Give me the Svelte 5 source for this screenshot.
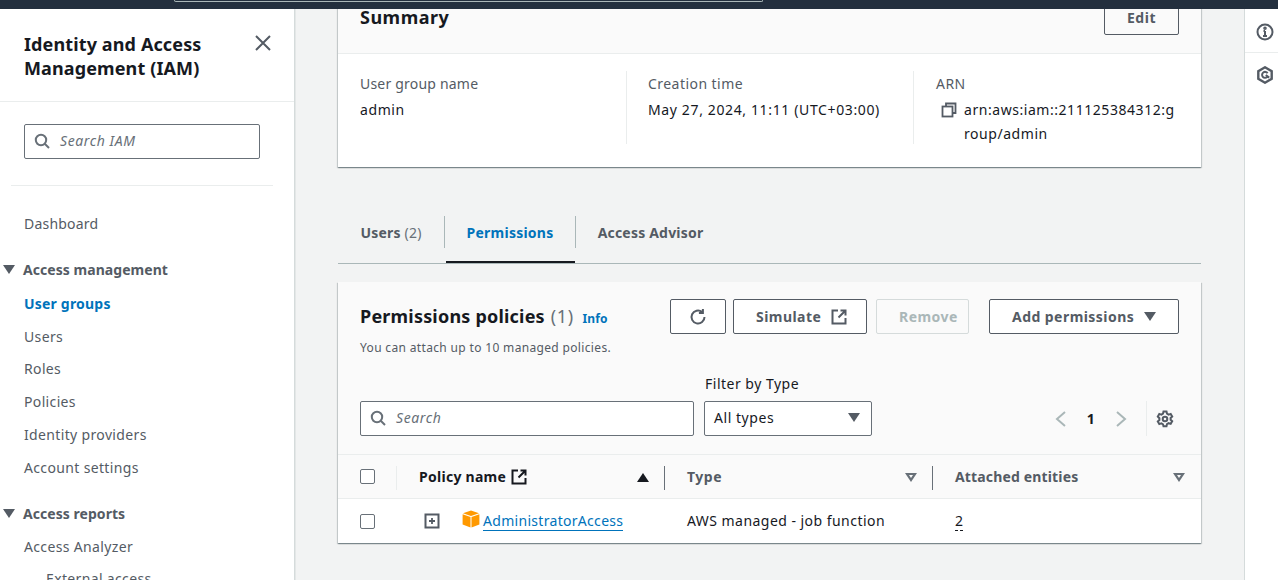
<script>
  const navA = ['Users', 'Roles', 'Policies', 'Identity providers', 'Account settings'];
</script>

<div class="page">
  <header class="topbar"><div class="topsearch"></div></header>
  <div class="body">
    <aside class="side">
      <div class="side-head">
        <h2>Identity and Access Management (IAM)</h2>
        <svg class="close" width="16" height="16" viewBox="0 0 16 16"><path d="M1 1l14 14M15 1L1 15" /></svg>
      </div>
      <div class="side-search-wrap">
        <div class="input side-search">
          <svg class="mag" width="16" height="16" viewBox="0 0 16 16"><circle cx="7" cy="7" r="5.2" /><path d="M11 11l4 4" /></svg>
          <span>Search IAM</span>
        </div>
      </div>
      <div class="side-rule"></div>
      <nav>
        <a class="item first">Dashboard</a>
        <div class="sect"><i class="caret"></i>Access management</div>
        <a class="item active">User groups</a>
        {#each navA as n}<a class="item">{n}</a>{/each}
        <div class="sect two"><i class="caret"></i>Access reports</div>
        <a class="item">Access Analyzer</a>
        <a class="item sub">External access</a>
      </nav>
    </aside>

    <main>
      <section class="card summary">
        <div class="sum-head">
          <h3>Summary</h3>
          <div class="btn edit">Edit</div>
        </div>
        <div class="sum-body">
          <div class="col c1">
            <div class="lab tight">User group name</div>
            <div class="val">admin</div>
          </div>
          <div class="col c2">
            <div class="lab">Creation time</div>
            <div class="val date">May 27, 2024, 11:11 (UTC+03:00)</div>
          </div>
          <div class="col c3">
            <div class="lab">ARN</div>
            <div class="arn">
              <svg class="copy" width="16" height="16" viewBox="0 0 16 16"><path d="M5 4V1.5h9.5V11H12" /><rect x="1.5" y="4.5" width="10" height="10" /></svg>
              <div class="arn-text">arn:aws:iam::211125384312:group/admin</div>
            </div>
          </div>
        </div>
      </section>

      <div class="tabs">
        <div class="tab t1">Users <span class="cnt">(2)</span></div>
        <div class="tab t2 on">Permissions</div>
        <div class="tab t3">Access Advisor</div>
      </div>

      <section class="card perms">
        <div class="p-head">
          <div class="p-title">
            <h3>Permissions policies <span class="cnt">(1)</span> <a class="info">Info</a></h3>
            <p>You can attach up to 10 managed policies.</p>
          </div>
          <div class="actions">
            <div class="btn refresh">
              <svg class="ic" width="18" height="18" viewBox="0 0 18 18"><path d="M15.5 9A6.5 6.5 0 1 1 13 3.9" /><path d="M13.9 1v4h-4" /></svg>
            </div>
            <div class="btn sim">Simulate
              <svg class="ic" width="16" height="16" viewBox="0 0 16 16"><path d="M7 1.5H1.5v13h13V9" /><path d="M9.5 1.5h5v5M14.500 1.5L7.5 8.500" /></svg>
            </div>
            <div class="btn off">Remove</div>
            <div class="btn add">Add permissions <i class="tri"></i></div>
          </div>
        </div>

        <div class="filters">
          <div class="input f-search">
            <svg class="mag" width="16" height="16" viewBox="0 0 16 16"><circle cx="7" cy="7" r="5.2" /><path d="M11 11l4 4" /></svg>
            <span>Search</span>
          </div>
          <div class="f-type">
            <label for="ty">Filter by Type</label>
            <div class="input sel" id="ty"><em>All types</em> <i class="tri"></i></div>
          </div>
          <div class="pager">
            <svg class="chev" width="12" height="18" viewBox="0 0 12 18"><path d="M10 2L2 9l8 7" /></svg>
            <b>1</b>
            <svg class="chev" width="12" height="18" viewBox="0 0 12 18"><path d="M2 2l8 7-8 7" /></svg>
            <div class="pg-rule"></div>
            <svg class="gear" width="18" height="18" viewBox="0 0 18 18"><path d="M7.5 1.5h3l.5 2.2 1.6.9 2.1-.7 1.5 2.6-1.6 1.5v1.800l1.600 1.500-1.500 2.600-2.100-.7-1.600.9-.5 2.200h-3L7 14.300l-1.600-.9-2.100.7-1.500-2.600 1.600-1.500V8.200L1.800 6.500l1.500-2.600 2.100.7L7 3.700z" /><circle cx="9" cy="9" r="2.300" /></svg>
          </div>
        </div>

        <div class="tr th">
          <div class="c-chk"><i class="chk"></i><i class="rule light"></i></div>
          <div class="c-name">
            <span class="name-h">Policy name</span>
            <svg class="ic dark" width="16" height="16" viewBox="0 0 16 16"><path d="M7 1.500H1.500v13h13V9" /><path d="M9.500 1.500h5v5M14.500 1.500L7.500 8.500" /></svg>
            <i class="sort"></i><i class="rule"></i>
          </div>
          <div class="c-type"><span class="ty">Type</span><i class="down"></i><i class="rule"></i></div>
          <div class="c-ent">Attached entities<i class="down"></i></div>
        </div>
        <div class="tr td">
          <div class="c-chk"><i class="chk"></i></div>
          <div class="c-name">
            <svg class="plus" width="16" height="16" viewBox="0 0 16 16"><rect x="1.500" y="1.500" width="13" height="13" /><path d="M8 5v6M5 8h6" /></svg>
            <svg class="cube" width="18" height="18" viewBox="0 0 18 18"><path fill="#f90" d="M9 .6l8 2.700-8 2.800-8-2.800z" /><path fill="#f90" d="M.6 4.300l7.900 2.800v10.300L.6 14.600z" /><path fill="#f90" d="M17.400 4.300L9.500 7.100v10.300l7.900-2.800z" /></svg>
            <a class="link">AdministratorAccess</a>
          </div>
          <div class="c-type date2">AWS managed - job function</div>
          <div class="c-ent"><span class="dotted">2</span></div>
        </div>
      </section>
    </main>

    <aside class="tools">
      <div class="tool t-a">
        <svg width="18" height="18" viewBox="0 0 18 18"><circle cx="9" cy="9" r="7.500" /><path d="M9 8v5M7 13h4M7.500 8H9" /><circle cx="9" cy="5.200" r=".8" /></svg>
      </div>
      <div class="tool t-b">
        <svg width="18" height="18" viewBox="0 0 18 18"><path class="hex" d="M9 1.300l6.700 3.800v7.800L9 16.700l-6.700-3.800V5.100z" /><path class="hex-in" d="M11.600 7.200A3 3 0 1 0 11.200 11M9.800 9l3.400 2.600" /></svg>
      </div>
    </aside>
  </div>
</div>

<style>
  :global(body) { margin: 0; background: #f2f3f3; }
  .page {
    width: 1278px; height: 580px; overflow: hidden;
    display: flex; flex-direction: column;
    font: 14px/20px "Noto Sans", "Open Sans", sans-serif; color: #16191f;
    background: #f2f3f3; letter-spacing: .35px;
  }
  svg { fill: none; stroke-width: 2; display: block; flex: none; }
  i { display: block; font-style: normal; }
  em { font-style: normal; }
  h2, h3, p { margin: 0; }

  .topbar { height: 9px; flex: none; background: #232f3e; position: relative; z-index: 3; overflow: hidden; }
  .topsearch { margin-left: 174px; width: 587px; height: 1px; border: 1px solid #aab7b8; border-top: 0; border-radius: 0 0 2px 2px; }

  .body { flex: 1; min-height: 0; display: flex; overflow: hidden; }

  .side { width: 294px; flex: none; background: #fff; border-right: 1px solid #d5dbdb; box-shadow: 1px 0 0 #e4e7e7; overflow: hidden; }
  .side-head { height: 93px; box-sizing: border-box; padding: 23px 24px 0; border-bottom: 1px solid #eaeded; display: flex; justify-content: space-between; }
  .side-head h2 { font-size: 18px; line-height: 24px; font-weight: 700; width: 200px; letter-spacing: .12px; }
  .close { stroke: #545b64; margin: 3px -1px 0 0; }
  .side-search-wrap { padding: 22px 34px 0 24px; }
  .input { box-sizing: border-box; background: #fff; border: 1px solid #687078; border-radius: 2px; display: flex; align-items: center; padding-bottom: 1px; }
  .side-search { height: 35px; }
  .mag { stroke: #687078; margin-left: 9px; }
  .input span { font-style: italic; color: #687078; margin-left: 10px; letter-spacing: .6px; }
  .side-rule { margin: 26px 21px 0 11px; height: 1px; background: #eaeded; }
  nav { padding-top: 21px; }
  .item { display: block; padding-left: 24px; height: 32.8px; line-height: 33px; color: #545b64; white-space: nowrap; }
  .item.first { letter-spacing: .2px; }
  .item.active { color: #0073bb; font-weight: 700; letter-spacing: .2px; }
  .item.sub { padding-left: 46px; }
  .sect { display: flex; align-items: center; height: 33px; margin-top: 14px; font-weight: 700; color: #545b64; padding-left: 3px; letter-spacing: .05px; }
  .sect.two { height: 32px; padding-top: 1px; box-sizing: border-box; }
  .caret { width: 0; height: 0; border: 6px solid transparent; border-top: 9px solid #545b64; border-bottom: 0; margin-right: 8px; margin-top: -2px; }

  main { flex: 1; min-width: 0; padding: 0 43px; border-right: 1px solid #d5dbdb; }
  .card { background: #fff; box-shadow: 0 1px 1px 0 rgba(0,28,36,.3), 1px 1px 1px 0 rgba(0,28,36,.15), -1px 1px 1px 0 rgba(0,28,36,.15); }
  .summary { margin-top: -20px; }
  .sum-head { height: 65px; box-sizing: border-box; background: #fafafa; border-bottom: 1px solid #eaeded; padding: 0 22px; display: flex; justify-content: space-between; align-items: flex-start; }
  .sum-head h3 { font-size: 18px; line-height: 16px; font-weight: 700; margin-top: 20px; letter-spacing: .5px; }
  .btn { box-sizing: border-box; height: 35px; border: 1px solid #545b64; border-radius: 2px; color: #545b64; font-weight: 700; display: flex; align-items: center; justify-content: center; background: #fff; letter-spacing: .45px; }
  .edit { width: 75px; margin-top: 11px; height: 35px; background: #fafafa; letter-spacing: .5px; }
  .sum-body { display: flex; height: 113px; box-sizing: border-box; padding-top: 17px; }
  .col { height: 73px; box-sizing: border-box; padding-left: 22px; }
  .c1 { width: 289px; border-right: 1px solid #eaeded; }
  .c2 { width: 287px; border-right: 1px solid #eaeded; padding-left: 21px; }
  .c3 { flex: 1; }
  .lab { color: #545b64; line-height: 20px; margin-top: 3px; letter-spacing: .45px; }
  .lab.tight { letter-spacing: .2px; }
  .val { margin-top: 6px; letter-spacing: .6px; }
  .val.date { letter-spacing: .63px; }
  .arn { display: flex; line-height: 24px; margin-top: 4px; }
  .copy { stroke: #545b64; stroke-width: 1.8; margin: 4px 7px 0 5px; }
  .arn-text { width: 212px; word-break: break-all; letter-spacing: .55px; }

  .tabs { display: flex; height: 47px; margin-top: 49px; border-bottom: 1px solid #aab7b8; }
  .tab { height: 32px; line-height: 33px; font-weight: 700; color: #545b64; box-sizing: border-box; text-align: center; position: relative; letter-spacing: .2px; }
  .t1 { width: 107px; border-right: 1px solid #aab7b8; }
  .t2 { width: 131px; border-right: 1px solid #aab7b8; letter-spacing: .25px; }
  .t3 { width: 149px; letter-spacing: .2px; }
  .tab.on { color: #0073bb; }
  .tab.on::after { content: ""; position: absolute; left: 1px; right: 0; bottom: -15px; height: 2px; background: #16191f; }
  .cnt { font-weight: 400; color: #687078; }

  .perms { margin-top: 18px; background: #fafafa; height: 261px; }
  .p-head { display: flex; justify-content: space-between; padding: 17px 22px 0; height: 78px; box-sizing: border-box; }
  .p-title h3 { font-size: 18px; line-height: 34px; font-weight: 700; white-space: nowrap; letter-spacing: .2px; }
  .p-title .cnt { font-size: 18px; margin-left: 1px; letter-spacing: .6px; }
  .info { font-size: 12px; font-weight: 700; color: #0073bb; margin-left: 4px; letter-spacing: .15px; }
  .p-title p { font-size: 12px; line-height: 16px; color: #545b64; margin-top: 4px; letter-spacing: .34px; }
  .actions { display: flex; }
  .refresh { width: 56px; margin-right: 7px; background: #fff; }
  .sim { width: 134px; margin-right: 9px; gap: 10px; justify-content: flex-start; padding-left: 22px; }
  .ic { stroke: #545b64; }
  .off { width: 93px; color: #aab7b8; border-color: #d5dbdb; margin-right: 20px; justify-content: flex-start; padding-left: 22px; background: #fafafa; }
  .add { width: 190px; gap: 7px; justify-content: flex-start; padding-left: 22px; }
  .tri { width: 0; height: 0; border: 6px solid transparent; border-top: 9px solid #545b64; border-bottom: 0; margin-left: 3px; }
  .sel .tri { margin-top: -1px; }

  .filters { display: flex; height: 95px; box-sizing: border-box; padding: 14px 22px 0; border-bottom: 1px solid #eaeded; align-items: flex-start; }
  .f-search { width: 334px; height: 35px; margin-top: 27px; }
  .f-type { width: 168px; margin-left: 10px; }
  .f-type label { display: block; line-height: 20px; margin: 0 0 7px 1px; letter-spacing: .5px; }
  .sel { height: 35px; padding: 0 11px 1px 9px; justify-content: space-between; letter-spacing: .55px; }
  .pager { margin-left: auto; height: 35px; margin-top: 27px; display: flex; align-items: center; }
  .chev { stroke: #aab7b8; }
  .pager b { width: 48px; text-align: center; font-weight: 700; }
  .pg-rule { width: 1px; height: 35px; background: #eaeded; margin: 0 9px 0 19px; }
  .gear { stroke: #545b64; margin-right: 5px; }

  .tr { display: grid; grid-template-columns: 59px 268px 268px 1fr; align-items: center; }
  .th { height: 43px; border-bottom: 1px solid #eaeded; font-weight: 700; color: #545b64; letter-spacing: .15px; }
  .td { height: 44px; background: #fff; color: #16191f; }
  .tr > div { display: flex; align-items: center; height: 100%; position: relative; box-sizing: border-box; }
  .c-chk { padding-left: 22px; }
  .c-name { padding-left: 22px; }
  .c-type, .c-ent { padding-left: 22px; }
  .ty { letter-spacing: .5px; }
  .date2 { letter-spacing: .46px; }
  .chk { box-sizing: border-box; width: 15px; height: 15px; border: 1px solid #687078; border-radius: 2px; background: #fff; }
  .rule { position: absolute; right: 0; top: 11px; height: 24px; width: 1px; background: #687078; }
  .rule.light { background: #eaeded; }
  .name-h { color: #16191f; letter-spacing: .27px; }
  .ic.dark { stroke: #16191f; margin-left: 5px; }
  .sort { position: absolute; left: 240px; top: 18px; width: 0; height: 0; border: 6px solid transparent; border-bottom: 9px solid #16191f; border-top: 0; }
  .down { position: absolute; right: 16px; top: 18px; width: 0; height: 0; border: 6px solid transparent; border-top: 9px solid #687078; border-bottom: 0; }
  .down::after { content: ""; position: absolute; left: -2.500px; top: -7.500px; border: 2.500px solid transparent; border-top: 3.500px solid #fafafa; border-bottom: 0; }
  .plus { stroke: #545b64; margin-left: 5px; }
  .plus path { stroke-width: 1.800; }
  .cube { margin-left: 22px; margin-top: -4px; }
  .link { color: #0073bb; border-bottom: 1px solid #0073bb; margin-left: 3px; line-height: 18px; letter-spacing: .3px; }
  .dotted { border-bottom: 1px dashed #16191f; line-height: 18px; }

  .tools { width: 33px; flex: none; background: #fff; }
  .tool { display: flex; justify-content: center; padding-left: 7px; }
  .tool svg { stroke: #545b64; }
  .hex { stroke-width: 2.400; }
  .hex-in { stroke-width: 2; }
  .t-a { height: 44px; box-sizing: border-box; padding-top: 14px; border-bottom: 1px solid #eaeded; }
  .t-b { padding-top: 13px; }
</style>
